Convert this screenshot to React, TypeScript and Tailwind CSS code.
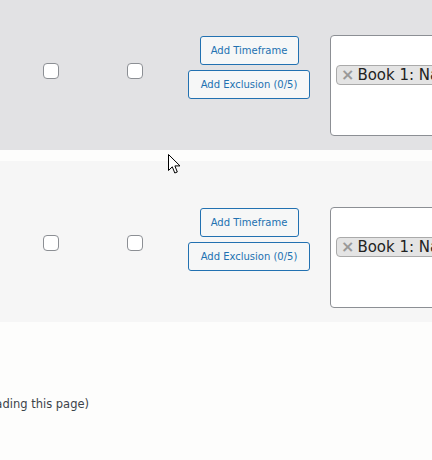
import React from 'react';

const rows = [
  { id: 1, bg: 'bg-[#e2e2e4]' },
  { id: 2, bg: 'bg-[#f6f6f6]' },
];

const Checkbox = () => (
  <div className="w-4 h-4 rounded-[4px] border border-[#8c8f94] bg-white shrink-0" />
);

const Row = ({ bg }: { bg: string }) => (
  <div className={`h-[161px] flex items-center ${bg}`}>
    <div className="ml-[43px] mt-[3px]">
      <Checkbox />
    </div>
    <div className="ml-[68px] mt-[3px]">
      <Checkbox />
    </div>
    <div className="ml-[45px] w-[122px] flex flex-col items-center gap-[5px] mb-[4px] shrink-0">
      <button className="h-[29px] w-[99px] rounded-[3px] border border-[#2271b1] bg-[#f6f7f7] text-[#2271b1] text-[10px]">
        Add Timeframe
      </button>
      <button className="h-[29px] w-[122px] rounded-[3px] border border-[#2271b1] bg-[#f6f7f7] text-[#2271b1] text-[10px]">
        Add Exclusion (0/5)
      </button>
    </div>
    <div className="ml-[20px] self-start mt-[46px] h-[101px] w-[220px] shrink-0 rounded-[4px] border border-[#8c8f94] bg-white pl-[5px] pt-[27px]">
      <div className="inline-flex items-center h-[20px] rounded-[4px] border border-[#aaaaaa] bg-[#e4e4e4] pl-[4px] pr-[6px] whitespace-nowrap">
        <span className="text-[#999999] text-[16px] leading-none font-bold mr-[3px]">×</span>
        <span className="text-[15px] leading-none text-[#222222]">Book 1: Name of the Book</span>
      </div>
    </div>
  </div>
);

const App: React.FC = () => {
  return (
    <div
      className="relative min-h-[460px] w-[432px] overflow-hidden bg-[#fdfdfc]"
      style={{ fontFamily: '"DejaVu Sans", Verdana, sans-serif' }}
    >
      <div className="-mt-[11px] flex flex-col gap-[11px]">
        {rows.map(r => (
          <Row key={r.id} bg={r.bg} />
        ))}
      </div>

      <div className="mt-[74px] w-[89px] flex justify-end whitespace-nowrap text-[11.5px] leading-[16px] text-[#3c434a]">
        (changes apply after reloading this page)
      </div>

      {/* mouse pointer */}
      <svg className="absolute left-[168px] top-[154px]" width="13" height="21" viewBox="0 0 13 21">
        <path
          d="M0.5 0.5 L0.5 16.5 L4.3 12.8 L6.8 19 L9.3 18 L6.9 11.9 L12 11.9 Z"
          fill="#ffffff"
          stroke="#000000"
          strokeWidth="1"
          strokeLinejoin="miter"
        />
      </svg>
    </div>
  );
};

export default App;
